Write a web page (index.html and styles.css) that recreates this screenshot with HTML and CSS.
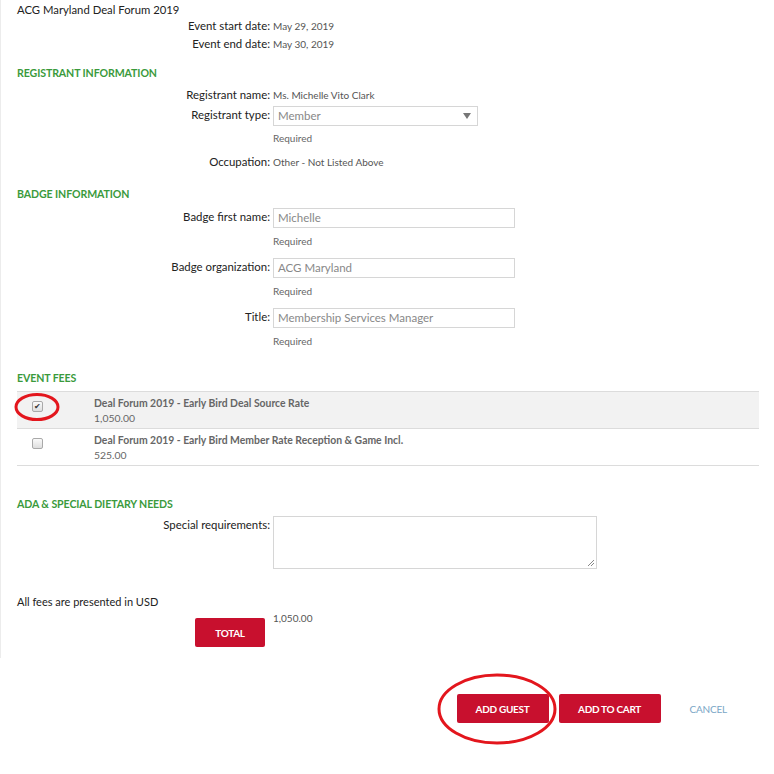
FILE: index.html
```html
<!DOCTYPE html>
<html lang="en">
<head>
<meta charset="utf-8">
<title>ACG Maryland Deal Forum 2019</title>
<link rel="stylesheet" href="styles.css">
</head>
<body>
<div class="page">
  <div class="form">
    <h1 class="event-title">ACG Maryland Deal Forum 2019</h1>
    <div class="row info"><span class="label">Event start date:</span><span class="value">May 29, 2019</span></div>
    <div class="row info"><span class="label">Event end date:</span><span class="value">May 30, 2019</span></div>

    <h2 class="section sec-reg">REGISTRANT INFORMATION</h2>
    <div class="row info"><span class="label">Registrant name:</span><span class="value">Ms. Michelle Vito Clark</span></div>
    <div class="row field f-type">
      <span class="label">Registrant type:</span>
      <div class="select"><span class="select-text">Member</span><svg class="caret" width="8" height="6" viewBox="0 0 8 6"><path d="M0 0H8L4 6Z" fill="#777"/></svg></div>
    </div>
    <div class="row req req-first"><span></span><span class="required">Required</span></div>
    <div class="row info occ"><span class="label">Occupation:</span><span class="value">Other - Not Listed Above</span></div>

    <h2 class="section sec-badge">BADGE INFORMATION</h2>
    <div class="row field f-first">
      <span class="label">Badge first name:</span>
      <div class="input">Michelle</div>
    </div>
    <div class="row req"><span></span><span class="required">Required</span></div>
    <div class="row field f-next">
      <span class="label">Badge organization:</span>
      <div class="input">ACG Maryland</div>
    </div>
    <div class="row req"><span></span><span class="required">Required</span></div>
    <div class="row field f-next">
      <span class="label">Title:</span>
      <div class="input">Membership Services Manager</div>
    </div>
    <div class="row req"><span></span><span class="required">Required</span></div>

    <h2 class="section sec-fees">EVENT FEES</h2>
    <div class="fees">
      <div class="fee selected">
        <div class="check-cell"><span class="checkbox checked">&#10004;</span></div>
        <div class="fee-text">
          <div class="fee-name">Deal Forum 2019 - Early Bird Deal Source Rate</div>
          <div class="fee-price">1,050.00</div>
        </div>
      </div>
      <div class="fee">
        <div class="check-cell"><span class="checkbox"></span></div>
        <div class="fee-text">
          <div class="fee-name">Deal Forum 2019 - Early Bird Member Rate Reception &amp; Game Incl.</div>
          <div class="fee-price">525.00</div>
        </div>
      </div>
    </div>

    <h2 class="section sec-ada">ADA &amp; SPECIAL DIETARY NEEDS</h2>
    <div class="row field f-ada">
      <span class="label">Special requirements:</span>
      <div class="textarea"><svg class="grip" width="8" height="8" viewBox="0 0 8 8"><path d="M7 1L1 7M7 4L4 7" stroke="#888" stroke-width="1"/></svg></div>
    </div>

    <p class="usd">All fees are presented in USD</p>
    <div class="row total-row">
      <div class="total-cell"><span class="btn total">TOTAL</span></div>
      <span class="value total-value">1,050.00</span>
    </div>
  </div>

  <div class="actions">
    <span class="btn guest">ADD GUEST</span>
    <span class="btn cart">ADD TO CART</span>
    <span class="cancel">CANCEL</span>
  </div>

  <svg class="marks" width="774" height="774" viewBox="0 0 774 774">
    <ellipse cx="37" cy="407" rx="21" ry="12.5" fill="none" stroke="#e3161d" stroke-width="3"/>
    <ellipse cx="497" cy="709" rx="58" ry="34" fill="none" stroke="#e3161d" stroke-width="3"/>
  </svg>
</div>
</body>
</html>
```

FILE: styles.css
```css
* { box-sizing: border-box; }
html, body { margin: 0; padding: 0; background: #fff; }
body {
  font-family: Lato, "Open Sans", "Liberation Sans", sans-serif;
  color: #333;
  width: 774px;
  height: 774px;
  overflow: hidden;
}
.page { position: relative; width: 774px; height: 774px; }
.form {
  border-left: 1px solid #ececec;
  padding: 3px 15px 5px 16px;
  height: 658px;
}
.event-title {
  margin: 0;
  font-size: 11.3px;
  line-height: 14px;
  font-weight: 400;
  color: #222;
}
.row {
  display: grid;
  grid-template-columns: 253px 1fr;
  column-gap: 3px;
  align-items: start;
}
.label {
  text-align: right;
  font-size: 11.4px;
  color: #222;
}
.value { font-size: 10px; color: #555; }
.info { line-height: 18px; }
.info .value { line-height: 18px; }
.section {
  margin: 0;
  font-size: 10.6px;
  line-height: 14px;
  font-weight: 700;
  color: #3a9a3c;
  letter-spacing: -0.1px;
}
.sec-reg { margin-top: 13px; margin-bottom: 6px; }
.sec-badge { margin-top: 16px; }
.sec-fees { margin-top: 23px; }
.sec-ada { margin-top: 31px; }
.field .label { line-height: 18px; }
.f-type { margin-top: 2px; }
.f-first { margin-top: 7px; }
.f-next { margin-top: 10px; }
.f-ada { margin-top: 5px; }
.select, .input {
  height: 20px;
  border: 1px solid #d6d6d6;
  background: #fff;
  font-size: 11.5px;
  line-height: 18px;
  color: #888;
  padding-left: 4px;
}
.select {
  width: 205px;
  display: flex;
  align-items: center;
  justify-content: space-between;
  padding-right: 6px;
}
.input { width: 242px; }
.req { margin-top: 6px; line-height: 14px; }
.req-first { margin-top: 5px; }
.required { font-size: 10px; color: #666; }
.occ { margin-top: 8px; }
.fees { margin-top: 6px; }
.fee {
  display: flex;
  height: 37px;
  border-top: 1px solid #dcdcdc;
}
.fee:last-child { border-bottom: 1px solid #dcdcdc; height: 38px; }
.fee.selected { background: #f2f2f2; }
.check-cell { width: 77px; padding: 9px 0 0 15px; }
.checkbox {
  display: block;
  width: 11px;
  height: 11px;
  border: 1px solid #a9a9a9;
  border-radius: 2px;
  background: linear-gradient(#fafafa, #dedede);
  font-size: 8px;
  line-height: 9px;
  text-align: center;
  color: #333;
}
.fee-text { padding-top: 4px; }
.fee-name { font-size: 10.4px; line-height: 15px; font-weight: 700; color: #666; }
.fee-price { font-size: 10.4px; line-height: 15px; color: #666; }
.textarea {
  width: 324px;
  height: 53px;
  border: 1px solid #d6d6d6;
  display: flex;
  align-items: flex-end;
  justify-content: flex-end;
  padding: 0 1px 1px 0;
}
.grip { display: block; }
.usd {
  margin: 25px 0 0;
  font-size: 11px;
  line-height: 16px;
  color: #222;
}
.total-row { margin-top: 2px; }
.total-cell { display: flex; justify-content: flex-end; padding: 6px 5px 0 0; }
.total-value { line-height: 12px; }
.btn {
  display: inline-flex;
  align-items: center;
  justify-content: center;
  height: 29px;
  background: #c8102e;
  color: #fff;
  font-size: 10px;
  font-weight: 700;
  letter-spacing: -0.3px;
  border-radius: 2px;
}
.total { width: 70px; }
.actions {
  display: flex;
  justify-content: flex-end;
  align-items: center;
  gap: 10px;
  margin-top: 36px;
  padding-right: 28px;
}
.guest { width: 92px; }
.cart { width: 102px; }
.cancel {
  padding: 0 19px;
  font-size: 10px;
  color: #7aa6c6;
  letter-spacing: -0.2px;
}
.marks { position: absolute; left: 0; top: 0; pointer-events: none; }
```
